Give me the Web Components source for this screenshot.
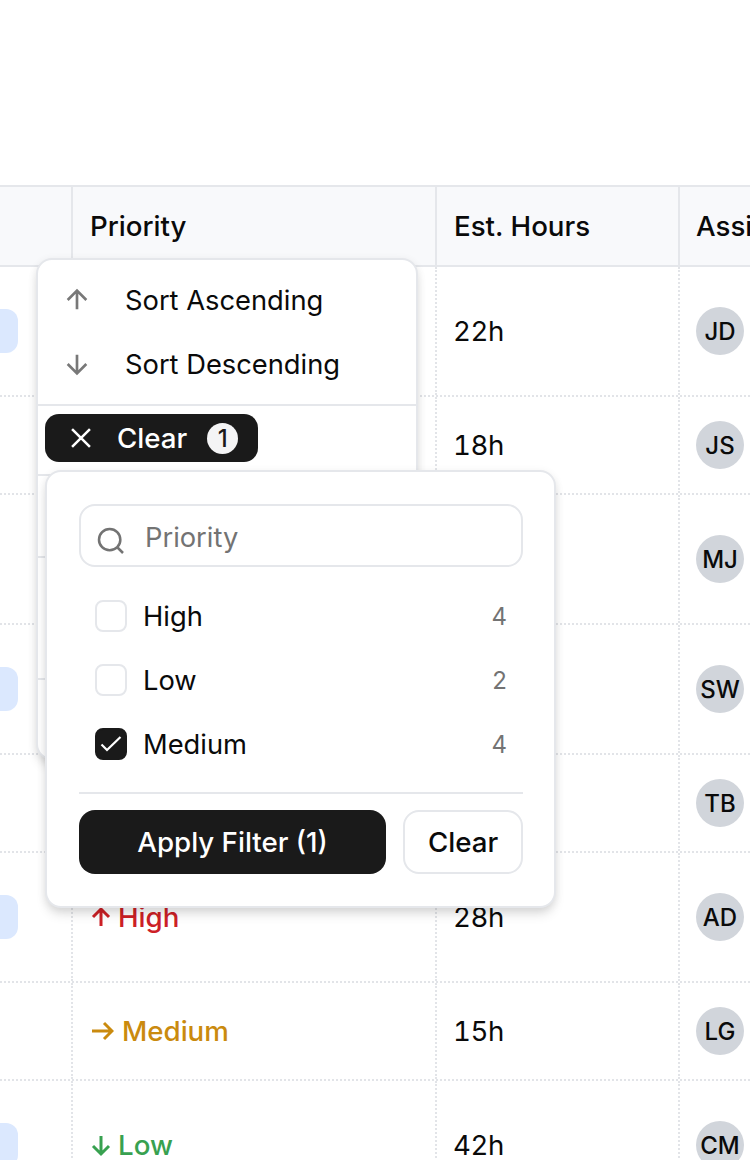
<!DOCTYPE html>
<html>
<head>
<meta charset="utf-8">
<title>Priority filter</title>
<style>
  html, body { margin: 0; height: 100%; overflow: hidden; background: #fff; }
  body { font-family: Inter, "Liberation Sans", sans-serif; color: #0a0a0a; }
</style>
</head>
<body>
<task-table>
  <task-row tall tag="1" priority="none" hours="22h" who="JD"></task-row>
  <task-row priority="none" hours="18h" who="JS"></task-row>
  <task-row tall priority="none" hours="" who="MJ"></task-row>
  <task-row tall tag="1" priority="none" hours="" who="SW"></task-row>
  <task-row priority="none" hours="" who="TB"></task-row>
  <task-row tall tag="1" priority="high" hours="28h" who="AD"></task-row>
  <task-row priority="medium" hours="15h" who="LG"></task-row>
  <task-row tall tag="1" priority="low" hours="42h" who="CM"></task-row>
</task-table>
<column-menu>
  <filter-popup></filter-popup>
</column-menu>

<script>
// header + rows, both use the same column template
class TaskTable extends HTMLElement {
    constructor() {
        super();
        const tpl = document.createElement('template');
        tpl.innerHTML = `
            <style>
                :host { display: block; padding-top: 185px; }
                .head {
                    display: grid;
                    grid-template-columns: 73px 364px 243px 1fr;
                    height: 78px;
                    background: #f8f9fb;
                    border-top: 2px solid #e5e7eb;
                    border-bottom: 2px solid #e5e7eb;
                    font-size: 27.7px;
                    font-weight: 500;
                }
                .head div {
                    display: flex;
                    align-items: center;
                    border-right: 2px solid #e5e7eb;
                    padding-left: 17px;
                    white-space: nowrap;
                    overflow: hidden;
                }
                .head div:first-child { padding: 0; }
                .head div:last-child { border-right: 0; padding-left: 16px; }
            </style>
            <div class="head">
                <div></div><div>Priority</div><div>Est. Hours</div><div>Assignee</div>
            </div>
            <slot></slot>
        `;
        this.attachShadow({ mode: 'open' }).appendChild(tpl.content.cloneNode(true));
    }
}

const ARROWS = {
    high: '<path d="M11 21V4M3 12l8-8 8 8"/>',
    low: '<path d="M11 3v18M3 13l8 8 8-8"/>',
    medium: '<path d="M2 12h20M14 4l8 8-8 8"/>'
};

class TaskRow extends HTMLElement {
    connectedCallback() {
        const p = this.getAttribute('priority');
        const label = { high: 'High', low: 'Low', medium: 'Medium' }[p];
        const w = p === 'medium' ? 24 : 22;
        const arrow = label
            ? `<span class="prio ${p}"><svg width="${w}" height="24" viewBox="0 0 ${w} 24" fill="none" stroke="currentColor" stroke-width="3">${ARROWS[p]}</svg>${label}</span>`
            : '';
        const tag = this.hasAttribute('tag') ? '<span class="tag"></span>' : '';
        this.attachShadow({ mode: 'open' }).innerHTML = `
            <style>
                :host {
                    display: grid;
                    grid-template-columns: 73px 364px 243px 1fr;
                    height: 96px;
                    border-bottom: 2px dotted #e2e4e8;
                    font-size: 27.6px;
                    font-variant-numeric: tabular-nums;
                }
                :host([tall]) { height: 128px; }
                .cell {
                    display: flex;
                    align-items: center;
                    padding-left: 17px;
                    border-right: 2px dotted #e2e4e8;
                    overflow: hidden;
                    white-space: nowrap;
                }
                .first { padding: 0; }
                .hours { padding-left: 16px; letter-spacing: -.4px; }
                .last { border-right: 0; padding-left: 16px; }
                .tag {
                    display: block;
                    width: 18px;
                    height: 44px;
                    background: #dbe8fe;
                    border-radius: 0 12px 12px 0;
                }
                .av {
                    width: 48px;
                    height: 48px;
                    border-radius: 50%;
                    background: #d1d5db;
                    display: flex;
                    align-items: center;
                    justify-content: center;
                    font-size: 24px;
                    font-weight: 500;
                    flex: none;
                }
                .prio { display: flex; align-items: center; gap: 6px; font-weight: 500; font-size: 27.7px; }
                .high { color: #cd2026; }
                .medium { color: #ca8a0e; gap: 8px; }
                .low { color: #38a150; }
            </style>
            <div class="cell first">${tag}</div>
            <div class="cell">${arrow}</div>
            <div class="cell hours">${this.getAttribute('hours')}</div>
            <div class="cell last"><span class="av">${this.getAttribute('who')}</span></div>
        `;
    }
}

// the sort menu that opens under the column header
class ColumnMenu extends HTMLElement {
    constructor() {
        super();
        const tpl = document.createElement('template');
        tpl.innerHTML = `
            <style>
                :host {
                    display: block;
                    position: absolute;
                    left: 36px;
                    top: 258px;
                    width: 378px;
                    height: 498px;
                    background: #fff;
                    border: 2px solid #e5e7eb;
                    border-radius: 16px;
                    box-shadow: 0 8px 12px -2px rgba(0,0,0,.12), 0 2px 8px rgba(0,0,0,.08);
                    font-size: 27.3px;
                }
                .item {
                    display: flex;
                    align-items: center;
                    height: 64px;
                    padding-left: 23px;
                    gap: 32px;
                }
                .sort { padding: 8px 0; height: 128px; border-bottom: 2px solid #e5e7eb; }
                .clear-row { padding: 8px 7px; height: 70px; border-bottom: 2px solid #e5e7eb; box-sizing: border-box; }
                .chip {
                    display: inline-flex;
                    align-items: center;
                    height: 48px;
                    width: 213px;
                    box-sizing: border-box;
                    padding-left: 20px;
                    gap: 20px;
                    background: #1a1a1a;
                    color: #fff;
                    border-radius: 14px;
                    font-weight: 500;
                    font-size: 27.7px;
                }
                .count {
                    width: 31px;
                    height: 31px;
                    border-radius: 50%;
                    background: #f4f4f5;
                    color: #1a1a1a;
                    display: flex;
                    align-items: center;
                    justify-content: center;
                    font-size: 24px;
                }
                .band { height: 80px; border-bottom: 2px solid #e5e7eb; }
                .band.b2 { height: 120px; }
            </style>
            <div class="sort">
                <div class="item">
                    <svg width="32" height="32" viewBox="0 0 24 24" fill="none" stroke="#787878" stroke-width="2"><path d="M12 19V5M5 12l7-7 7 7"/></svg>
                    Sort Ascending
                </div>
                <div class="item">
                    <svg width="32" height="32" viewBox="0 0 24 24" fill="none" stroke="#787878" stroke-width="2"><path d="M12 5v14M5 12l7 7 7-7"/></svg>
                    Sort Descending
                </div>
            </div>
            <div class="clear-row">
                <span class="chip">
                    <svg width="32" height="32" viewBox="0 0 24 24" fill="none" stroke="#fff" stroke-width="1.9"><path d="M18.7 5.3L5.3 18.7M5.3 5.3l13.4 13.4"/></svg>
                    Clear
                    <span class="count">1</span>
                </span>
            </div>
            <div class="band"></div>
            <div class="band b2"></div>
            <slot></slot>
        `;
        this.attachShadow({ mode: 'open' }).appendChild(tpl.content.cloneNode(true));
    }
}

class FilterPopup extends HTMLElement {
    connectedCallback() {
        const options = [['High', 4, false], ['Low', 2, false], ['Medium', 4, true]];
        const rows = options.map(([name, n, on]) => `
            <div class="opt">
                <span class="box ${on ? 'on' : ''}">${on ? '<svg width="22" height="22" viewBox="0 0 22 22" fill="none" stroke="#fff" stroke-width="2.2"><path d="M1.5 11.5l5.5 5.5L20.5 4"/></svg>' : ''}</span>
                <span class="name">${name}</span>
                <span class="n">${n}</span>
            </div>`).join('');
        this.attachShadow({ mode: 'open' }).innerHTML = `
            <style>
                :host {
                    display: block;
                    position: absolute;
                    left: 7px;
                    top: 210px;
                    width: 444px;
                    padding: 32px 31px 32px 32px;
                    background: #fff;
                    border: 2px solid #e5e7eb;
                    border-radius: 16px;
                    box-shadow: 0 8px 12px -2px rgba(0,0,0,.12), 0 2px 8px rgba(0,0,0,.08);
                    font-size: 27.3px;
                }
                .search {
                    display: flex;
                    align-items: center;
                    height: 59px;
                    border: 2px solid #e5e7eb;
                    border-radius: 16px;
                    padding-left: 14px;
                    gap: 18px;
                    color: #737373;
                    margin-bottom: 17px;
                }
                .search svg { margin-top: 10px; }
                .search span { margin-top: 3px; }
                .opt { display: flex; align-items: center; height: 64px; padding: 0 16px; gap: 16px; }
                .box {
                    width: 32px;
                    height: 32px;
                    box-sizing: border-box;
                    border: 2px solid #e5e7eb;
                    border-radius: 8px;
                    display: flex;
                    align-items: center;
                    justify-content: center;
                }
                .box.on { background: #1a1a1a; border-color: #1a1a1a; }
                .name { flex: 1; }
                .n { color: #737373; font-size: 24px; }
                .foot { margin-top: 16px; border-top: 2px solid #e5e7eb; padding-top: 16px; display: flex; gap: 17px; font-weight: 500; font-size: 27.7px; }
                .apply, .clear {
                    height: 64px;
                    box-sizing: border-box;
                    border-radius: 16px;
                    display: flex;
                    align-items: center;
                    justify-content: center;
                }
                .apply { flex: 1; background: #1a1a1a; color: #fff; }
                .clear { width: 120px; border: 2px solid #e5e7eb; }
            </style>
            <div class="search">
                <svg width="32" height="32" viewBox="0 0 24 24" fill="none" stroke="#737373" stroke-width="1.9"><circle cx="11" cy="11" r="8"/><path d="M21 21l-4.3-4.3"/></svg>
                <span>Priority</span>
            </div>
            ${rows}
            <div class="foot"><div class="apply">Apply Filter (1)</div><div class="clear">Clear</div></div>
        `;
    }
}

customElements.define('task-table', TaskTable);
customElements.define('task-row', TaskRow);
customElements.define('column-menu', ColumnMenu);
customElements.define('filter-popup', FilterPopup);
</script>
</body>
</html>
